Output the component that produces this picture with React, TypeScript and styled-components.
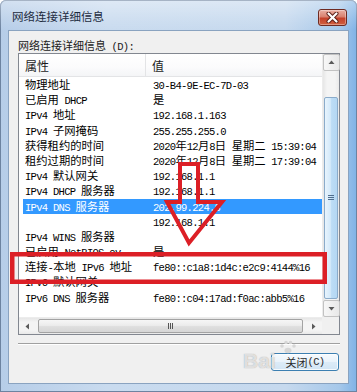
import styled, { createGlobalStyle } from 'styled-components'

const GlobalStyle = createGlobalStyle`
  html, body {
    margin: 0;
    padding: 0;
    background: #ffffff;
  }
  body {
    font-family: "Noto Sans CJK SC", sans-serif;
  }
`

const Window = styled.div`
  position: relative;
  width: 357px;
  height: 392px;
  display: flex;
  flex-direction: column;
  box-sizing: border-box;
  overflow: hidden;
  border-radius: 6px 6px 0 0;
  background: linear-gradient(90deg, #b6cde8 0%, #c9dbef 30%, #c6d9ee 80%, #a6c8ea 95%, #7fb2e6 100%);
  box-shadow: inset 0 0 0 1px #6d83a0;
`

const TitleBar = styled.div`
  height: 30px;
  flex: none;
  display: flex;
  align-items: flex-start;
  justify-content: space-between;
  box-sizing: border-box;
  padding: 8px 10px 0 12px;
  background: linear-gradient(180deg, rgba(255, 255, 255, 0.4) 0%, rgba(255, 255, 255, 0.1) 70%, rgba(255, 255, 255, 0) 100%);
`

const Title = styled.span`
  font-size: 11.5px;
  line-height: 16px;
  color: #1d2b3e;
`

const CloseButton = styled.div`
  width: 29px;
  height: 17px;
  margin-top: 1px;
  box-sizing: border-box;
  border: 1px solid #6e2b22;
  border-radius: 3px;
  display: flex;
  align-items: center;
  justify-content: center;
  background: linear-gradient(180deg, #eab0a4 0%, #d9816f 45%, #c4412b 55%, #d0603f 100%);
  box-shadow: inset 0 0 0 1px rgba(255, 255, 255, 0.35);
`

const Client = styled.div`
  flex: 1;
  margin: 0 8px 8px 8px;
  box-sizing: border-box;
  border: 1px solid #8aa3c0;
  background: #f0f0f0;
  padding: 6px 8px 0 9px;
  display: flex;
  flex-direction: column;
`

const Label = styled.div`
  height: 16px;
  font-size: 11px;
  line-height: 16px;
  color: #1a1a1a;
`

const ListBox = styled.div`
  height: 282px;
  box-sizing: border-box;
  border: 1px solid #828790;
  background: #ffffff;
  display: grid;
  grid-template-columns: 1fr 17px;
  grid-template-rows: 1fr 17px;
`

const Content = styled.div`
  overflow: hidden;
  display: flex;
  flex-direction: column;
`

const Header = styled.div`
  height: 23px;
  flex: none;
  box-sizing: border-box;
  display: grid;
  grid-template-columns: 127px 1fr;
  border-bottom: 1px solid #e3e4e6;
  background: linear-gradient(180deg, #ffffff 0%, #fbfbfc 60%, #f4f5f7 100%);
`

const HeaderCell = styled.div<{ $divider?: boolean }>`
  display: flex;
  align-items: center;
  padding-left: 6px;
  font-size: 12px;
  color: #1b1b1b;
  border-right: ${({ $divider }) => ($divider ? '1px solid #e3e4e6' : 'none')};
`

const Row = styled.div<{ $selected?: boolean }>`
  display: grid;
  grid-template-columns: 123px 1fr;
  margin-left: 4px;
  height: 15.2px;
  line-height: 15.2px;
  font-size: 11.3px;
  white-space: nowrap;
  color: ${({ $selected }) => ($selected ? '#ffffff' : '#000000')};
  background: ${({ $selected }) => ($selected ? '#3399ff' : 'transparent')};
`

const Cell = styled.div<{ $value?: boolean }>`
  overflow: hidden;
  padding-left: ${({ $value }) => ($value ? '7px' : '2px')};
`

const Latin = styled.span`
  font-family: "Liberation Mono", monospace;
  font-size: 10.5px;
  letter-spacing: -0.7px;
`

const VScroll = styled.div`
  display: flex;
  flex-direction: column;
  background: linear-gradient(90deg, #e6e6e6 0%, #f4f4f4 25%, #f4f4f4 75%, #e9e9e9 100%);
  border-left: 1px solid #ececec;
`

const HScroll = styled.div`
  display: flex;
  background: linear-gradient(180deg, #e6e6e6 0%, #f4f4f4 25%, #f4f4f4 75%, #e9e9e9 100%);
  border-top: 1px solid #ececec;
`

const Corner = styled.div`
  background: #f0f0f0;
`

const ScrollButton = styled.div<{ $boxed?: boolean }>`
  width: 17px;
  height: 17px;
  flex: none;
  box-sizing: border-box;
  display: flex;
  align-items: center;
  justify-content: center;
  border: ${({ $boxed }) => ($boxed ? '1px solid #c2c2c2' : '1px solid transparent')};
  border-radius: 2px;
  background: ${({ $boxed }) => ($boxed ? 'linear-gradient(90deg, #f7f7f7, #e8e8e8)' : 'transparent')};
`

const Track = styled.div<{ $vertical?: boolean }>`
  flex: 1;
  display: flex;
  flex-direction: ${({ $vertical }) => ($vertical ? 'column' : 'row')};
`

const VThumb = styled.div`
  margin: 26px 0 0 1px;
  width: 14px;
  height: 202px;
  box-sizing: border-box;
  border: 1px solid #8aabca;
  border-radius: 2px;
  background: linear-gradient(90deg, #e8f4fd 0%, #d3e9fa 45%, #bcdcf5 55%, #b4d7f3 100%);
  display: flex;
  align-items: center;
  justify-content: center;
`

const HThumb = styled.div`
  margin: 1px 0 0 2px;
  width: 265px;
  height: 14px;
  box-sizing: border-box;
  border: 1px solid #a3a3a3;
  border-radius: 2px;
  background: linear-gradient(180deg, #f6f6f6 0%, #ececec 45%, #dedede 55%, #d6d6d6 100%);
  display: flex;
  align-items: center;
  justify-content: center;
`

const Separator = styled.div`
  margin-top: 8px;
  border-top: 1px solid #a0a0a0;
  border-bottom: 1px solid #ffffff;
`

const ButtonRow = styled.div`
  display: flex;
  justify-content: flex-end;
  margin-top: 8px;
  padding-right: 1px;
`

const PushButton = styled.div`
  width: 68px;
  height: 18px;
  box-sizing: border-box;
  border: 1px solid #3c7fb1;
  border-radius: 3px;
  background: linear-gradient(180deg, #f6fafd 0%, #eaf3fb 48%, #dcebf7 52%, #d2e5f5 100%);
  box-shadow: inset 0 0 0 1px rgba(255, 255, 255, 0.8);
  display: flex;
  align-items: center;
  justify-content: center;
  font-size: 11px;
  color: #2a2a2a;
`

const Annotations = styled.svg`
  position: absolute;
  left: 0;
  top: 0;
  pointer-events: none;
`

const Watermark = styled.div`
  position: absolute;
  left: 243px;
  top: 349px;
  font-family: "Liberation Sans", Arial, sans-serif;
  font-weight: bold;
  font-size: 21px;
  color: rgba(255, 255, 255, 0.7);
  text-shadow: 0 0 1px rgba(110, 110, 110, 0.7);
  pointer-events: none;
`

const Paw = styled.svg`
  position: absolute;
  left: 279px;
  top: 340px;
  pointer-events: none;
`

type Dir = 'up' | 'down' | 'left' | 'right'

const arrowPoints: Record<Dir, string> = {
  up: '0.5,5 3.5,1.5 6.5,5',
  down: '0.5,2 3.5,5.5 6.5,2',
  left: '5,0.5 1.5,3.5 5,6.5',
  right: '2,0.5 5.5,3.5 2,6.5',
}

function Arrow({ dir }: { dir: Dir }) {
  return (
    <svg width="7" height="7" viewBox="0 0 7 7">
      <polygon points={arrowPoints[dir]} fill="#5a5a5a" />
    </svg>
  )
}

// split ascii runs out so they get the narrow mono face
function Mixed({ text }: { text: string }) {
  const parts = text.split(/([\x00-\xff]+)/).filter(Boolean)
  return (
    <>
      {parts.map((part, i) =>
        /^[\x00-\xff]+$/.test(part) ? <Latin key={i}>{part}</Latin> : <span key={i}>{part}</span>
      )}
    </>
  )
}

const rows: { name: string; value: string; selected?: boolean }[] = [
  { name: '物理地址', value: '30-B4-9E-EC-7D-03' },
  { name: '已启用 DHCP', value: '是' },
  { name: 'IPv4 地址', value: '192.168.1.163' },
  { name: 'IPv4 子网掩码', value: '255.255.255.0' },
  { name: '获得租约的时间', value: '2020年12月8日 星期二 15:39:04' },
  { name: '租约过期的时间', value: '2020年12月8日 星期二 17:39:04' },
  { name: 'IPv4 默认网关', value: '192.168.1.1' },
  { name: 'IPv4 DHCP 服务器', value: '192.168.1.1' },
  { name: 'IPv4 DNS 服务器', value: '202.99.224.8', selected: true },
  { name: '', value: '192.168.1.1' },
  { name: 'IPv4 WINS 服务器', value: '' },
  { name: '已启用 NetBIOS ov...', value: '是' },
  { name: '连接-本地 IPv6 地址', value: 'fe80::c1a8:1d4c:e2c9:4144%16' },
  { name: 'IPv6 默认网关', value: '' },
  { name: 'IPv6 DNS 服务器', value: 'fe80::c04:17ad:f0ac:abb5%16' },
]

export default function App() {
  return (
    <>
      <GlobalStyle />
      <Window>
        <TitleBar>
          <Title>网络连接详细信息</Title>
          <CloseButton>
            <svg width="13" height="11" viewBox="0 0 13 11">
              <path d="M2.5 1.5 L10.5 9.5 M10.5 1.5 L2.5 9.5" stroke="#5a1d16" strokeWidth="4" strokeLinecap="round" />
              <path d="M2.5 1.5 L10.5 9.5 M10.5 1.5 L2.5 9.5" stroke="#ffffff" strokeWidth="2.2" strokeLinecap="round" />
            </svg>
          </CloseButton>
        </TitleBar>

        <Client>
          <Label>
            <Mixed text="网络连接详细信息 (D):" />
          </Label>

          <ListBox>
            <Content>
              <Header>
                <HeaderCell $divider>属性</HeaderCell>
                <HeaderCell>值</HeaderCell>
              </Header>
              {rows.map((row, i) => (
                <Row key={i} $selected={row.selected}>
                  <Cell>
                    <Mixed text={row.name} />
                  </Cell>
                  <Cell $value>
                    <Mixed text={row.value} />
                  </Cell>
                </Row>
              ))}
            </Content>

            <VScroll>
              <ScrollButton $boxed>
                <Arrow dir="up" />
              </ScrollButton>
              <Track $vertical>
                <VThumb>
                  <svg width="6" height="6" viewBox="0 0 6 6">
                    <path d="M0 0.5 H6 M0 2.5 H6 M0 4.5 H6" stroke="#4f6e8e" strokeWidth="1" />
                  </svg>
                </VThumb>
              </Track>
              <ScrollButton $boxed>
                <Arrow dir="down" />
              </ScrollButton>
            </VScroll>

            <HScroll>
              <ScrollButton>
                <Arrow dir="left" />
              </ScrollButton>
              <Track>
                <HThumb>
                  <svg width="6" height="6" viewBox="0 0 6 6">
                    <path d="M0.5 0 V6 M2.5 0 V6 M4.5 0 V6" stroke="#555555" strokeWidth="1" />
                  </svg>
                </HThumb>
              </Track>
              <ScrollButton>
                <Arrow dir="right" />
              </ScrollButton>
            </HScroll>
            <Corner />
          </ListBox>

          <Separator />

          <ButtonRow>
            <PushButton>
              <Mixed text="关闭(C)" />
            </PushButton>
          </ButtonRow>
        </Client>

        <Paw width="18" height="14" viewBox="0 0 18 14">
          <circle cx="3" cy="6" r="1.8" fill="#d6d6d6" />
          <circle cx="7" cy="2.5" r="1.8" fill="#d6d6d6" />
          <circle cx="11.5" cy="2.5" r="1.8" fill="#d6d6d6" />
          <circle cx="15" cy="6" r="1.8" fill="#d6d6d6" />
          <ellipse cx="9" cy="10.5" rx="3.5" ry="2.8" fill="#d6d6d6" />
        </Paw>
        <Watermark>Bai</Watermark>

        <Annotations width="357" height="392" viewBox="0 0 357 392">
          <rect x="12.25" y="254.25" width="312.5" height="27.5" fill="none" stroke="#dc1f26" strokeWidth="4.5" />
          <polygon
            points="180,164 198,164 198,202 222,202 189,243 167,202 180,202"
            fill="none"
            stroke="#dc1f26"
            strokeWidth="4"
            strokeLinejoin="miter"
          />
        </Annotations>
      </Window>
    </>
  )
}
